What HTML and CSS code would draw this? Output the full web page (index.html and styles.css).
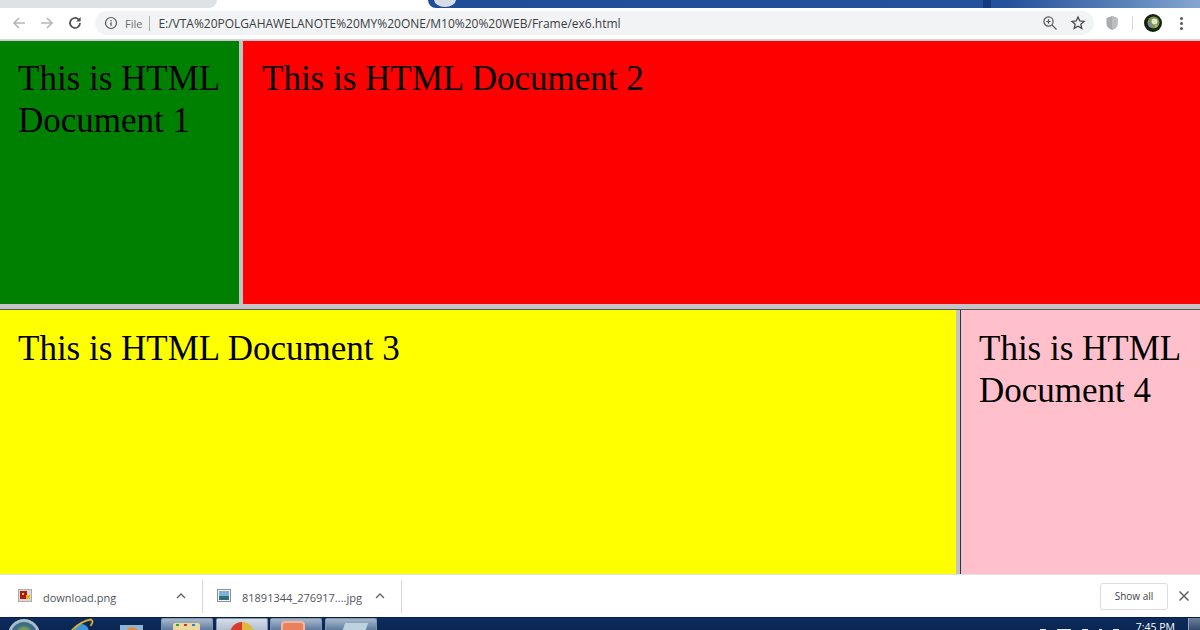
FILE: index.html
```html
<!DOCTYPE html>
<html lang="en">
<head>
<meta charset="utf-8">
<title>ex6.html</title>
<link rel="stylesheet" href="styles.css">
</head>
<body>
<div class="tabstrip">
  <div class="tab-grey"></div>
  <div class="tab-gap"></div>
  <div class="wallpaper"><span class="wall-circle"></span><span class="wall-dark"></span></div>
</div>
<div class="toolbar">
  <svg class="nav" width="16" height="16" viewBox="0 0 16 16"><path d="M14 8H3M8 3L3 8l5 5" fill="none" stroke="#b4b6b9" stroke-width="1.6"/></svg>
  <svg class="nav" width="16" height="16" viewBox="0 0 16 16"><path d="M2 8h11M8 3l5 5-5 5" fill="none" stroke="#b4b6b9" stroke-width="1.6"/></svg>
  <svg class="nav" width="16" height="16" viewBox="0 0 16 16"><path d="M13 8a5 5 0 1 1-1.500-3.600" fill="none" stroke="#4a4c50" stroke-width="1.700"/><path d="M13.600 2v4.400H9.200z" fill="#4a4c50"/></svg>
  <div class="omnibox">
    <svg class="info" width="14" height="14" viewBox="0 0 14 14"><circle cx="7" cy="7" r="5.500" fill="none" stroke="#55585c" stroke-width="1.200"/><path d="M7 6.200v3.600M7 4v1.300" stroke="#55585c" stroke-width="1.300"/></svg>
    <span class="file">File</span>
    <span class="sep"></span>
    <span class="url">E:/VTA%20POLGAHAWELANOTE%20MY%20ONE/M10%20%20WEB/Frame/ex6.html</span>
    <svg class="zoom-ic" width="16" height="16" viewBox="0 0 16 16"><circle cx="6.500" cy="6.500" r="4.600" fill="none" stroke="#55585c" stroke-width="1.200"/><path d="M10 10l4.500 4.500M4.300 6.500h4.400M6.500 4.300v4.400" stroke="#55585c" stroke-width="1.200"/></svg>
    <svg class="star" width="16" height="16" viewBox="0 0 16 16"><path d="M8 2l1.800 4 4.200.4-3.200 2.800 1 4.200L8 11.200l-3.800 2.200 1-4.200L2 6.400 6.200 6z" fill="none" stroke="#4a4c50" stroke-width="1.300"/></svg>
  </div>
  <svg class="shield" width="14" height="16" viewBox="0 0 14 16"><path d="M7 1l5.500 2v6c0 3-2.500 5-5.500 6-3-1-5.500-3-5.500-6V3z" fill="#a9abad"/><path d="M7 1l5.500 2v6c0 3-2.500 5-5.500 6z" fill="#bcbec0"/></svg>
  <span class="tool-sep"></span>
  <svg class="avatar" width="18" height="18" viewBox="0 0 18 18"><circle cx="9" cy="9" r="9" fill="#13240f"/><circle cx="9.500" cy="8.500" r="6" fill="#7f9454"/><circle cx="10.500" cy="7.500" r="3" fill="#e3e6c0"/><circle cx="6.500" cy="11" r="2" fill="#7d86b4"/><circle cx="12" cy="12" r="1.500" fill="#a9b46e"/></svg>
  <span class="menu"><i></i><i></i><i></i></span>
</div>
<main class="frames">
  <div class="frame-row top">
    <section class="doc green">This is HTML Document 1</section>
    <section class="doc red">This is HTML Document 2</section>
  </div>
  <div class="frame-row bottom">
    <section class="doc yellow">This is HTML Document 3</section>
    <section class="doc pink">This is HTML Document 4</section>
  </div>
</main>
<div class="downloads">
  <div class="dl first">
    <svg width="14" height="14" viewBox="0 0 14 14"><rect x=".5" y=".5" width="13" height="12" fill="#ddd9d0" stroke="#aaa"/><rect x="2" y="2" width="7" height="8" fill="#b01818"/><rect x="8" y="6" width="4" height="4" fill="#e8b020"/><rect x="4" y="4" width="2" height="2" fill="#f0d040"/></svg>
    <span class="dl-name">download.png</span>
    <svg class="chev" width="12" height="8" viewBox="0 0 12 8"><path d="M2 6l4-4 4 4" fill="none" stroke="#5f6368" stroke-width="1.400"/></svg>
  </div>
  <div class="dl second">
    <svg width="14" height="14" viewBox="0 0 14 14"><rect x=".5" y=".5" width="13" height="12" fill="#f2f2f2" stroke="#8b9094"/><rect x="2" y="2" width="10" height="5" fill="#7fb0d8"/><rect x="2" y="7" width="10" height="4" fill="#2f6f75"/></svg>
    <span class="dl-name">81891344_276917....jpg</span>
    <svg class="chev" width="12" height="8" viewBox="0 0 12 8"><path d="M2 6l4-4 4 4" fill="none" stroke="#5f6368" stroke-width="1.400"/></svg>
  </div>
  <button class="show-all">Show all</button>
  <svg class="close" width="12" height="12" viewBox="0 0 12 12"><path d="M1.500 1.500l9 9M10.500 1.500l-9 9" stroke="#5f6368" stroke-width="1.500"/></svg>
</div>
<div class="taskbar">
  <span class="orb"><span class="orb-core"></span></span>
  <svg class="ie" width="26" height="13" viewBox="0 0 26 13"><circle cx="12" cy="14" r="8" fill="#3d97d6"/><path d="M2 13C8 7 15 2.500 22 1.500c2.500 1 1.500 4-.5 6.500" fill="none" stroke="#dcae2c" stroke-width="1.800"/></svg>
  <span class="media"><span class="media-dot"></span></span>
  <span class="task t1"><span class="folder"><i class="d-g"></i><i class="d-r"></i><i class="d-b"></i></span></span>
  <span class="task t2"><span class="chrome"></span></span>
  <span class="task t3"><span class="ppt"></span></span>
  <span class="task t4"><span class="paper"></span></span>
  <span class="tray"><i></i><i></i><i></i><i></i><i></i></span>
  <span class="clock">7:45 PM</span>
  <span class="show-desk"></span>
</div>
</body>
</html>
```
FILE: styles.css
```css
* { box-sizing: border-box; }
html, body { margin: 0; height: 630px; overflow: hidden; }
body { display: flex; flex-direction: column; width: 1200px; background: #fff; font-family: "Open Sans", "Liberation Sans", sans-serif; }

.tabstrip { display: flex; height: 8px; flex: none; background: #fff; }
.tab-grey { width: 217px; background: #dee1e6; border-bottom-right-radius: 8px; }
.tab-gap { width: 211px; background: #fff; }
.wallpaper { flex: 1; position: relative; border-bottom-left-radius: 8px; overflow: hidden; background: linear-gradient(90deg, #1f4d9a 0%, #24519b 75%, #5a81b8 90%, #86a6cf 100%); }
.wall-circle { position: absolute; left: 6px; top: -8px; width: 22px; height: 15px; border-radius: 50%; background: #d9dde6; }
.wall-dark { position: absolute; left: 555px; top: 0; width: 8px; height: 8px; background: #123a7d; }

.toolbar { display: flex; align-items: center; height: 32px; flex: none; background: #fff; border-bottom: 1px solid #d4d6d9; padding-bottom: 1px; }
.nav { margin-left: 11px; flex: none; }
.nav + .nav { margin-left: 12px; }
.omnibox { display: flex; align-items: center; width: 999px; height: 24px; margin-left: 12px; padding-left: 9px; background: #f1f3f4; border-radius: 12px; }
.info { flex: none; }
.file { margin-left: 7px; font-size: 11px; color: #6a6d71; }
.sep { width: 1px; height: 15px; margin: 0 8px 0 7px; background: #a8abae; }
.url { flex: 1; font-size: 12px; letter-spacing: -.01px; color: #3b3e42; white-space: nowrap; }
.zoom-ic { margin-right: 12px; }
.star { margin-right: 8px; }
.shield { margin-left: 11px; }
.tool-sep { width: 1px; height: 14px; margin-left: 13px; background: #d6d8da; }
.avatar { margin-left: 11px; }
.menu { display: flex; flex-direction: column; gap: 2px; margin-left: 18px; }
.menu i { display: block; width: 3px; height: 3px; border-radius: 50%; background: #55585c; }

.frames { display: flex; flex-direction: column; gap: 5px; height: 534px; flex: none; background: #c4c4c4; border-top: 1px solid #c9cacc; }
.frame-row { display: flex; }
.top { height: 263px; }
.bottom { height: 265px; border-top: 1px solid #55565a; }
.doc { padding: 17px 0 0 18px; font-family: "Liberation Serif", "Times New Roman", serif; font-size: 35px; line-height: 42px; color: #000; }
.bottom .doc { padding-top: 18px; }
.green { width: 239px; background: #008000; }
.red { width: 957px; margin-left: 4px; padding-left: 19px; background: #f00; }
.yellow { width: 956px; background: #ff0; }
.pink { width: 240px; margin-left: 4px; background: #ffc0cb; border-left: 1px solid #1f3a3a; }

.downloads { display: flex; align-items: center; height: 43px; flex: none; background: #fff; border-top: 1px solid #dfe1e4; }
.dl { display: flex; align-items: center; height: 33px; border-right: 1px solid #d5d7d9; font-size: 11px; color: #50535c; }
.first { width: 203px; padding-left: 18px; }
.second { width: 199px; padding-left: 14px; }
.dl-name { margin-left: 11px; flex: 1; margin-top: 2px; }
.chev { margin-right: 15px; }
.show-all { margin-left: auto; width: 68px; height: 27px; padding: 0; background: #fff; border: 1px solid #dadce0; border-radius: 3px; font: 10px "Open Sans", sans-serif; color: #3f4248; }
.close { margin: 0 10px 0 10px; }

.taskbar { position: relative; display: flex; flex: 1; align-items: flex-start; overflow: hidden; background: linear-gradient(180deg, #0d2c5e 0%, #0a2552 100%); border-top: 1px solid #0a1d40; }
.orb { position: absolute; left: 8px; top: 1px; width: 32px; height: 32px; border-radius: 50%; background: #a9bccb; padding: 3px; }
.orb-core { display: block; height: 26px; border-radius: 50%; background: radial-gradient(circle at 50% 45%, #d9553a 0 16%, #76a54c 26%, #3f6f86 45%, #2f5f88 100%); }
.ie { position: absolute; left: 69px; top: 0; }
.media { position: absolute; left: 120px; top: 7px; width: 23px; height: 8px; background: #8db6d6; }
.media-dot { display: block; width: 12px; height: 12px; margin: 2px 0 0 6px; border-radius: 50%; background: #e88a3a; }
.task { position: absolute; top: 0; width: 52px; height: 14px; overflow: hidden; background: linear-gradient(180deg, #a8b8cb, #4f6f98); border: 1px solid #7f95b0; border-bottom: 0; border-radius: 2px 2px 0 0; }
.t1 { left: 161px; } .t3 { left: 270px; } .t4 { left: 325px; }
.t2 { left: 216px; background: linear-gradient(180deg, #d6dde6, #a9bbcf); }
.folder { display: flex; gap: 5px; padding: 1px 0 0 3px; margin: 4px 0 0 11px; width: 27px; height: 12px; background: #ecd9a0; border-radius: 2px 2px 0 0; }
.folder i { display: block; width: 3px; height: 2px; }
.d-g { background: #3f9a44; } .d-r { background: #c8342a; } .d-b { background: #2f7fd0; }
.chrome { display: block; margin: 3px 0 0 13px; width: 24px; height: 24px; border-radius: 50%; background: conic-gradient(#e0b83a 0 25%, #d93a2b 25% 100%); }
.ppt { display: block; margin: 2px 0 0 10px; width: 24px; height: 14px; border-radius: 4px 4px 0 0; background: #e9825c; border: 2px solid #f0b8a0; border-bottom: 0; }
.paper { display: block; margin: 4px 0 0 17px; width: 23px; height: 12px; background: #bcd2dc; transform: skewX(-20deg); }
.tray { position: absolute; left: 1040px; top: 11px; display: flex; gap: 11px; }
.tray i { display: block; width: 6px; height: 2px; background: #dfe6ee; }
.tray i:nth-child(2) { width: 14px; }
.tray i:nth-child(4) { width: 3px; }
.clock { position: absolute; right: 25px; top: 3px; font: 10.5px "Open Sans", sans-serif; color: #fff; line-height: 13px; }
.show-desk { position: absolute; right: 0; top: 0; width: 12px; height: 13px; background: linear-gradient(180deg, #6f8199, #2c466c); border-left: 1px solid #95a4b8; }
```
